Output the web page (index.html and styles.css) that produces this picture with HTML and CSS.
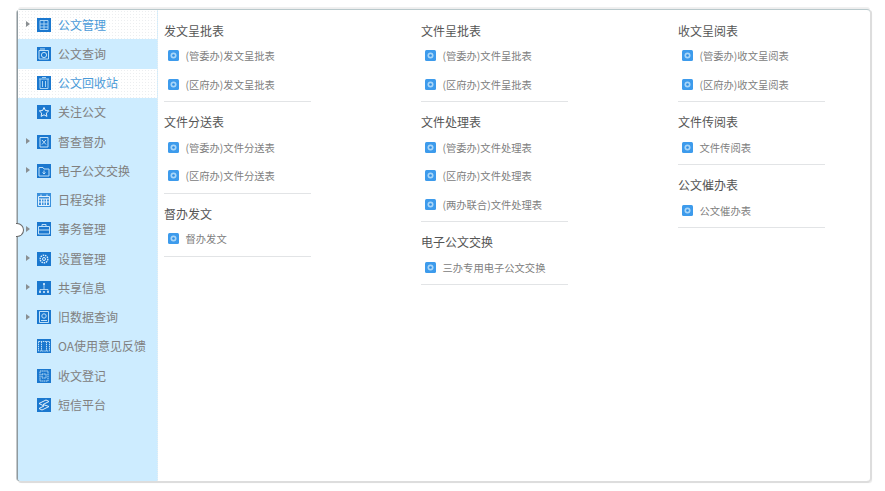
FILE: index.html
```html
<!DOCTYPE html>
<html lang="zh-CN">
<head>
<meta charset="utf-8">
<title>公文管理</title>
<link rel="stylesheet" href="styles.css">
</head>
<body>
<svg class="defs" width="0" height="0" aria-hidden="true">
  <symbol id="i-doc" viewBox="0 0 14 14"><rect width="14" height="14" fill="#1b78cf"/><path d="M3 2.500h8v9H3zM7 2.500v9M3 6h8M3 9h8" fill="none" stroke="#a9d3f3" stroke-width="1"/></symbol>
  <symbol id="i-search" viewBox="0 0 14 14"><rect width="14" height="14" fill="#1b78cf"/><path d="M2 3.500h9.500v8.500H2z" fill="none" stroke="#bfe0f8"/><circle cx="7" cy="8" r="2.600" fill="none" stroke="#bfe0f8"/><path d="M3 2h5" stroke="#bfe0f8"/></symbol>
  <symbol id="i-bin" viewBox="0 0 14 14"><rect width="14" height="14" fill="#1b78cf"/><path d="M2 3h10M3 3v9.500h8V3M5.500 5v6M8.500 5v6M5 1.500h4" fill="none" stroke="#a9d3f3"/></symbol>
  <symbol id="i-star" viewBox="0 0 14 14"><rect width="14" height="14" fill="#1b78cf"/><path d="M7 2.500l1.400 3 3.300.4-2.400 2.200.6 3.300L7 9.800l-2.900 1.600.6-3.300-2.400-2.200 3.300-.4z" fill="none" stroke="#e4f2fc"/></symbol>
  <symbol id="i-watch" viewBox="0 0 14 14"><rect width="14" height="14" fill="#1b78cf"/><path d="M3 2.500h8v9.500H3z" fill="none" stroke="#bfe0f8"/><path d="M5 5l4 4.500M9 5L5 9.500" stroke="#bfe0f8"/></symbol>
  <symbol id="i-folder" viewBox="0 0 14 14"><rect width="14" height="14" fill="#1b78cf"/><path d="M2 3.500h4l1 1.500h5v7H2z" fill="none" stroke="#bfe0f8"/><path d="M7 6.500v3.500M5.500 8.500L7 10l1.500-1.500" fill="none" stroke="#bfe0f8"/></symbol>
  <symbol id="i-cal" viewBox="0 0 14 14"><rect width="14" height="14" fill="#3a90dc"/><path d="M1.500 3.500h11v9h-11zM1.500 6h11M4.500 6v6.500M7 6v6.500M9.500 6v6.500M1.500 9h11M4 1.500v2M10 1.500v2" fill="none" stroke="#e2f1fc"/></symbol>
  <symbol id="i-case" viewBox="0 0 14 14"><rect width="14" height="14" fill="#1b78cf"/><path d="M1.500 4.500h11v7.500h-11zM5 4.500V2.500h4v2M1.500 8h11" fill="none" stroke="#bfe0f8"/></symbol>
  <symbol id="i-gear" viewBox="0 0 14 14"><rect width="14" height="14" fill="#1b78cf"/><circle cx="7" cy="7" r="3.800" fill="none" stroke="#d8ecfb" stroke-width="1.400" stroke-dasharray="1.500 .8"/><circle cx="7" cy="7" r="1.500" fill="none" stroke="#d8ecfb"/></symbol>
  <symbol id="i-share" viewBox="0 0 14 14"><rect width="14" height="14" fill="#1b78cf"/><path d="M7 2.500v6M3 11V8.500h8V11" fill="none" stroke="#cfe6f8" stroke-width=".8"/><circle cx="7" cy="3" r="1" fill="#e4f2fc"/><circle cx="3" cy="11" r="1" fill="#e4f2fc"/><circle cx="7" cy="11" r="1" fill="#e4f2fc"/><circle cx="11" cy="11" r="1" fill="#e4f2fc"/></symbol>
  <symbol id="i-old" viewBox="0 0 14 14"><rect width="14" height="14" fill="#1b78cf"/><path d="M2.500 1.500h9v11h-9z" fill="none" stroke="#bfe0f8"/><circle cx="7" cy="6" r="2.200" fill="none" stroke="#bfe0f8"/><path d="M4 10.500h6" stroke="#bfe0f8"/></symbol>
  <symbol id="i-oa" viewBox="0 0 14 14"><rect width="14" height="14" fill="#1b78cf"/><path d="M1.500 2.500h11v9.500h-11zM4.500 2.500v9.500M9.500 2.500v9.500" fill="none" stroke="#bfe0f8" stroke-dasharray="1.500 .7"/></symbol>
  <symbol id="i-reg" viewBox="0 0 14 14"><rect width="14" height="14" fill="#1b78cf"/><path d="M3 2h8v10H3zM5 5h4v4H5z" fill="none" stroke="#bfe0f8" stroke-dasharray="1.500 .6"/></symbol>
  <symbol id="i-sms" viewBox="0 0 14 14"><rect width="14" height="14" fill="#1b78cf"/><path d="M2 5.500l7-3.500 3 1.500-6 3 6 2-7 3.500-3-1.500 5-2.500z" fill="none" stroke="#e4f2fc"/></symbol>
  <symbol id="i-form" viewBox="0 0 11 11"><rect width="11" height="11" rx="1.500" fill="#3d9bec"/><circle cx="5.500" cy="5.500" r="3" fill="#a9d6f8"/><circle cx="5.500" cy="5.500" r="1.300" fill="#2f8fe4"/></symbol>
</svg>
<main class="panel">
  <span class="handle"></span>
  <nav class="side">
    <a class="row row-on has-sub"><svg class="ico"><use href="#i-doc"/></svg><span>公文管理</span></a>
    <a class="row"><svg class="ico"><use href="#i-search"/></svg><span>公文查询</span></a>
    <a class="row row-on"><svg class="ico"><use href="#i-bin"/></svg><span>公文回收站</span></a>
    <a class="row"><svg class="ico"><use href="#i-star"/></svg><span>关注公文</span></a>
    <a class="row has-sub"><svg class="ico"><use href="#i-watch"/></svg><span>督查督办</span></a>
    <a class="row has-sub"><svg class="ico"><use href="#i-folder"/></svg><span>电子公文交换</span></a>
    <a class="row"><svg class="ico"><use href="#i-cal"/></svg><span>日程安排</span></a>
    <a class="row has-sub"><svg class="ico"><use href="#i-case"/></svg><span>事务管理</span></a>
    <a class="row has-sub"><svg class="ico"><use href="#i-gear"/></svg><span>设置管理</span></a>
    <a class="row has-sub"><svg class="ico"><use href="#i-share"/></svg><span>共享信息</span></a>
    <a class="row has-sub"><svg class="ico"><use href="#i-old"/></svg><span>旧数据查询</span></a>
    <a class="row"><svg class="ico"><use href="#i-oa"/></svg><span>OA使用意见反馈</span></a>
    <a class="row"><svg class="ico"><use href="#i-reg"/></svg><span>收文登记</span></a>
    <a class="row"><svg class="ico"><use href="#i-sms"/></svg><span>短信平台</span></a>
  </nav>
  <div class="content">
    <div class="col">
      <section class="group"><h3>发文呈批表</h3>
        <a class="item"><svg class="mini"><use href="#i-form"/></svg>(管委办)发文呈批表</a>
        <a class="item"><svg class="mini"><use href="#i-form"/></svg>(区府办)发文呈批表</a>
      </section>
      <section class="group"><h3>文件分送表</h3>
        <a class="item"><svg class="mini"><use href="#i-form"/></svg>(管委办)文件分送表</a>
        <a class="item"><svg class="mini"><use href="#i-form"/></svg>(区府办)文件分送表</a>
      </section>
      <section class="group"><h3>督办发文</h3>
        <a class="item"><svg class="mini"><use href="#i-form"/></svg>督办发文</a>
      </section>
    </div>
    <div class="col">
      <section class="group"><h3>文件呈批表</h3>
        <a class="item"><svg class="mini"><use href="#i-form"/></svg>(管委办)文件呈批表</a>
        <a class="item"><svg class="mini"><use href="#i-form"/></svg>(区府办)文件呈批表</a>
      </section>
      <section class="group"><h3>文件处理表</h3>
        <a class="item"><svg class="mini"><use href="#i-form"/></svg>(管委办)文件处理表</a>
        <a class="item"><svg class="mini"><use href="#i-form"/></svg>(区府办)文件处理表</a>
        <a class="item"><svg class="mini"><use href="#i-form"/></svg>(两办联合)文件处理表</a>
      </section>
      <section class="group"><h3>电子公文交换</h3>
        <a class="item"><svg class="mini"><use href="#i-form"/></svg>三办专用电子公文交换</a>
      </section>
    </div>
    <div class="col">
      <section class="group"><h3>收文呈阅表</h3>
        <a class="item"><svg class="mini"><use href="#i-form"/></svg>(管委办)收文呈阅表</a>
        <a class="item"><svg class="mini"><use href="#i-form"/></svg>(区府办)收文呈阅表</a>
      </section>
      <section class="group"><h3>文件传阅表</h3>
        <a class="item"><svg class="mini"><use href="#i-form"/></svg>文件传阅表</a>
      </section>
      <section class="group"><h3>公文催办表</h3>
        <a class="item"><svg class="mini"><use href="#i-form"/></svg>公文催办表</a>
      </section>
    </div>
  </div>
</main>
</body>
</html>
```
FILE: styles.css
```css
* { box-sizing: border-box; }
html, body { height: 100%; }
body {
  margin: 0;
  padding: 10px 15px 10px 18px;
  background: #fff;
  font-family: "Noto Sans CJK SC", "Liberation Sans", sans-serif;
  color: #808080;
}
.defs { position: absolute; }
.panel {
  position: relative;
  display: flex;
  height: 100%;
  background: #fff;
  border-radius: 3px;
  box-shadow: -1px 0 0 #8f9a9f, -2px 0 0 #c4c8ca, 0 -1px 0 #b9c9cc, 0 -2px 0 #eee, 0 -3px 0 #f0f0f0, 2px 0 0 #ddd, 0 2px 0 #ddd, 2px 2px 1px #e8e8e8;
}
.handle {
  position: absolute;
  left: -2px;
  top: 213px;
  width: 8px;
  height: 14px;
  background: #fff;
  border: 1px solid #666;
  border-left: 0;
  border-radius: 0 7px 7px 0;
}
.side {
  width: 140px;
  flex: none;
  background: #cdecff;
  display: flex;
  flex-direction: column;
  border-radius: 3px 0 0 3px;
  border-right: 1px dotted #e6eef2;
}
.row {
  height: 29.25px;
  flex: none;
  display: flex;
  align-items: center;
  padding-left: 19px;
  font-size: 12px;
  color: #808080;
  position: relative;
}
.row span { position: relative; top: -.5px; }
.row-on {
  color: #4a9ad8;
  background-color: #fff;
  background-image: radial-gradient(circle, #eceef0 .6px, transparent .7px);
  background-size: 3px 3px;
}
.has-sub::before {
  content: "";
  position: absolute;
  left: 8px;
  top: 11px;
  border-left: 4px solid #8a8f92;
  border-top: 3.500px solid transparent;
  border-bottom: 3.500px solid transparent;
}
.ico { width: 14px; height: 14px; margin-right: 7px; flex: none; }
.content {
  flex: 1;
  display: flex;
  padding: 10.500px 0 0 6px;
  min-width: 0;
}
.col { width: 257px; flex: none; }
.col:last-child { flex: 1; width: auto; min-width: 0; }
.group {
  width: 147px;
  padding-bottom: 2.500px;
  margin-bottom: 10px;
  border-bottom: 1px solid #e2e4e6;
}
h3 {
  margin: 0;
  height: 21px;
  line-height: 19px;
  font-size: 12px;
  font-weight: 400;
  color: #555;
  white-space: nowrap;
}
.item {
  display: flex;
  align-items: center;
  height: 28.500px;
  font-size: 10.300px;
  color: #808080;
  white-space: nowrap;
  padding-left: 3.500px;
}
.mini { width: 11px; height: 11px; margin-right: 7px; flex: none; }
```
